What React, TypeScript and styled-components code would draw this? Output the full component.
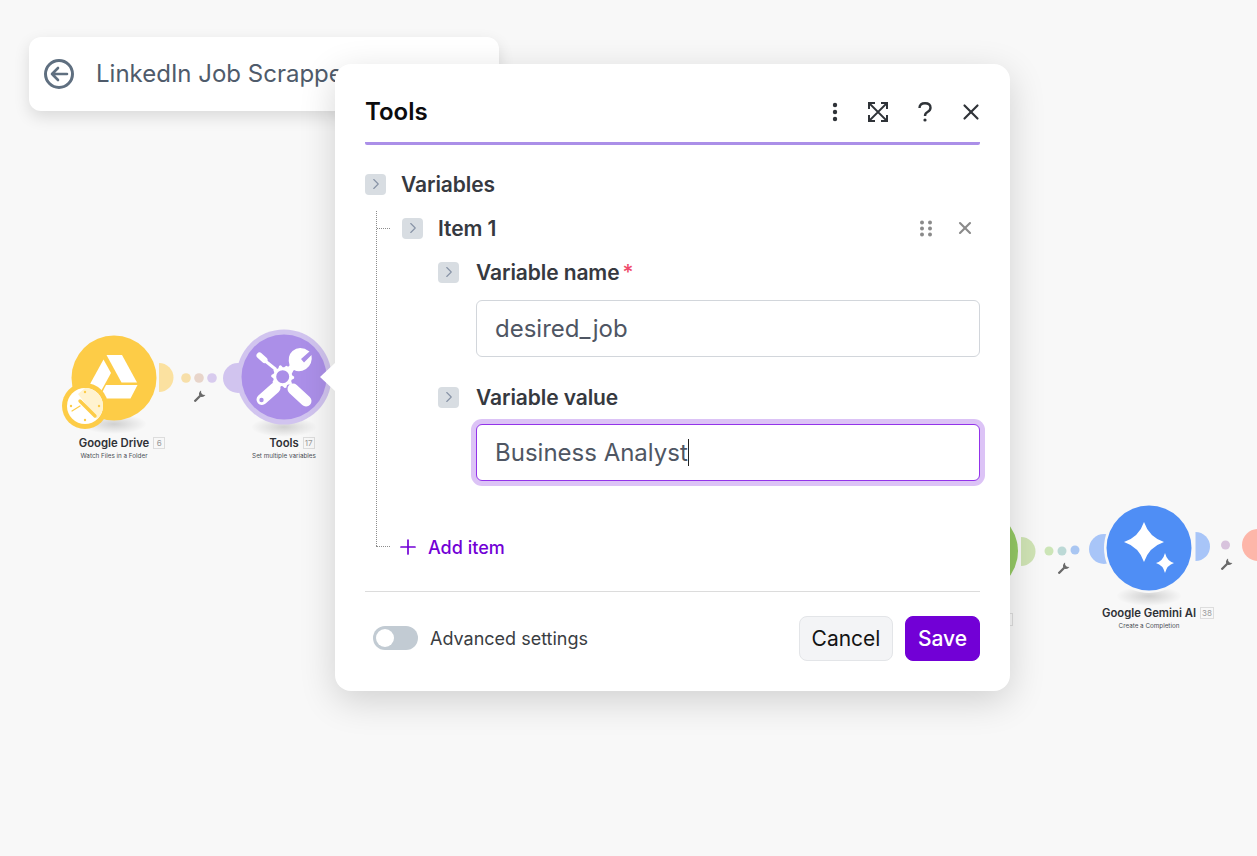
import React from "react";
import styled, { createGlobalStyle } from "styled-components";
import { X, Plus, ChevronRight } from "lucide-react";

const Global = createGlobalStyle`
  html, body { margin: 0; padding: 0; height: 100%; background: #f8f8f8; overflow: hidden; }
  #root { height: 100%; }
  * { box-sizing: border-box; }
`;

const Page = styled.div`
  position: relative;
  width: 1257px;
  height: 856px;
  overflow: hidden;
  background: #f8f8f8;
  font-family: Inter, "Liberation Sans", sans-serif;
`;

const TitleBar = styled.div`
  position: absolute;
  left: 29px;
  top: 37px;
  width: 470px;
  height: 74px;
  background: #fff;
  border-radius: 12px;
  box-shadow: 0 6px 16px rgba(0, 0, 0, 0.12);
  display: flex;
  align-items: center;
  gap: 21px;
  padding: 0 0 1px 14px;
  overflow: hidden;
`;

const TitleText = styled.span`
  font-size: 24px;
  color: #4f5b6b;
  white-space: nowrap;
  padding-bottom: 1px;
`;

const CanvasLayer = styled.svg`
  position: absolute;
  left: 0;
  top: 0;
`;

const NodeLabel = styled.div<{ $x: number; $y: number }>`
  position: absolute;
  left: ${(p) => p.$x}px;
  top: ${(p) => p.$y}px;
  width: 200px;
  transform: translateX(-50%);
  display: flex;
  flex-direction: column;
  align-items: center;
  gap: 2px;
`;

const NodeName = styled.div`
  position: relative;
  font-size: 11.3px;
  font-weight: 600;
  line-height: 13px;
  color: #2f3136;
  white-space: nowrap;
`;

const IdBox = styled.span`
  position: absolute;
  left: calc(100% + 4px);
  top: 0;
  min-width: 12px;
  height: 12px;
  padding: 0 1px;
  border: 1px solid #dddddd;
  font-size: 8px;
  font-weight: 400;
  line-height: 10px;
  text-align: center;
  color: #9a9a9a;
`;

const NodeSub = styled.div`
  font-size: 6.3px;
  line-height: 9px;
  color: #4b4f55;
  white-space: nowrap;
`;

const Modal = styled.div`
  position: absolute;
  left: 335px;
  top: 64px;
  width: 675px;
  height: 627px;
  background: #fff;
  border-radius: 16px;
  box-shadow: 0 10px 36px rgba(0, 0, 0, 0.16);
  padding: 0 30px;
  display: flex;
  flex-direction: column;
`;

const Pointer = styled.div`
  position: absolute;
  left: -15px;
  top: 299px;
  width: 0;
  height: 0;
  border-top: 14px solid transparent;
  border-bottom: 14px solid transparent;
  border-right: 15px solid #fff;
`;

const Header = styled.header`
  height: 81px;
  flex: none;
  border-bottom: 3px solid #ab8fe8;
  border-radius: 0 0 2px 2px;
  display: flex;
  align-items: center;
  justify-content: space-between;
  padding-top: 17px;
`;

const Heading = styled.h2`
  margin: 0;
  font-size: 24px;
  font-weight: 600;
  color: #0c0c0e;
`;

const HeaderIcons = styled.div`
  display: flex;
  align-items: center;
  color: #2f3338;
`;

const IconSlot = styled.span<{ $w: number }>`
  display: flex;
  justify-content: center;
  align-items: center;
  width: ${(p) => p.$w}px;
`;

const CloseSlot = styled.span`
  display: flex;
  justify-content: flex-end;
  width: 52px;
  margin-right: -4px;
`;

const Body = styled.div`
  position: relative;
  flex: 1;
  padding-top: 28px;
`;

const TreeV = styled.div`
  position: absolute;
  left: 11px;
  top: 66px;
  height: 335px;
  border-left: 1px dotted #8d8d8d;
`;

const TreeH = styled.div<{ $top: number; $left: number; $w: number }>`
  position: absolute;
  left: ${(p) => p.$left}px;
  top: ${(p) => p.$top}px;
  width: ${(p) => p.$w}px;
  border-top: 1px dotted #8d8d8d;
`;

const Row = styled.div<{ $indent: number; $mb: number; $gap: number }>`
  display: flex;
  align-items: center;
  gap: ${(p) => p.$gap}px;
  height: 22px;
  margin-left: ${(p) => p.$indent}px;
  margin-bottom: ${(p) => p.$mb}px;
`;

const ChevBox = styled.span`
  width: 21px;
  height: 21px;
  flex: none;
  border-radius: 4px;
  background: #d8dde2;
  color: #8793a6;
  display: flex;
  align-items: center;
  justify-content: center;
`;

const RowLabel = styled.span`
  font-size: 21px;
  font-weight: 600;
  color: #36393f;
  letter-spacing: -0.1px;
  white-space: nowrap;
`;

const Required = styled.span`
  color: #ef4a6b;
  margin-left: 3px;
  font-weight: 500;
`;

const RowActions = styled.div`
  margin-left: auto;
  display: flex;
  align-items: center;
  gap: 23px;
  padding-right: 5px;
  color: #8a8a8a;
`;

const Field = styled.div<{ $focus?: boolean; $mb: number }>`
  margin-left: 111px;
  margin-bottom: ${(p) => p.$mb}px;
  height: 57px;
  padding: 0 0 1px 18px;
  display: flex;
  align-items: center;
  border-radius: 6px;
  background: #fff;
  font-size: 24px;
  color: #4f5663;
  border: 1px solid ${(p) => (p.$focus ? "#9333ea" : "#d2d6db")};
  box-shadow: ${(p) => (p.$focus ? "0 0 0 5px #dcc3f6" : "none")};
`;

const Caret = styled.span`
  display: inline-block;
  width: 1px;
  height: 27px;
  background: #222;
`;

const AddItem = styled.div`
  display: flex;
  align-items: center;
  gap: 8px;
  margin-left: 31px;
  color: #7200d6;
  font-size: 18px;
  font-weight: 500;
`;

const Footer = styled.footer`
  flex: none;
  height: 100px;
  border-top: 1px solid #dcdcdc;
  display: flex;
  align-items: center;
  justify-content: space-between;
  padding: 0 0 7px 8px;
`;

const ToggleWrap = styled.div`
  display: flex;
  align-items: center;
  gap: 12px;
  font-size: 18px;
  color: #3a3d42;
`;

const Toggle = styled.div`
  width: 45px;
  height: 24px;
  border-radius: 12px;
  background: #c2cbd3;
  padding: 3px;
`;

const ToggleKnob = styled.div`
  width: 18px;
  height: 18px;
  border-radius: 50%;
  background: #fff;
`;

const Buttons = styled.div`
  display: flex;
  gap: 12px;
`;

const Btn = styled.button<{ $primary?: boolean }>`
  width: ${(p) => (p.$primary ? 75 : 94)}px;
  height: 45px;
  padding: 0;
  border-radius: 8px;
  font-family: inherit;
  font-size: 21px;
  font-weight: ${(p) => (p.$primary ? 500 : 400)};
  background: ${(p) => (p.$primary ? "#7200d6" : "#f3f4f6")};
  color: ${(p) => (p.$primary ? "#fff" : "#141414")};
  border: 1px solid ${(p) => (p.$primary ? "#7200d6" : "#e3e5e8")};
`;

const Wrench = ({ x, y }: { x: number; y: number }) => (
  <g transform={`translate(${x} ${y}) rotate(45) scale(1.2)`} fill="#6a6a6a">
    <path d="M-1 -1.2 L-1 5 Q0 5.8 1 5 L1 -1.2 Q3 -2.2 2.6 -5 L1 -3.6 L-1 -3.6 L-2.6 -5 Q-3 -2.2 -1 -1.2Z" />
  </g>
);

const Shadow = ({ cx, cy }: { cx: number; cy: number }) => (
  <ellipse cx={cx} cy={cy} rx="33" ry="10" fill="url(#nodeShadow)" />
);

const gearPath = () => {
  const teeth = 10;
  let d = "";
  for (let i = 0; i < teeth * 4; i++) {
    const a = (i / (teeth * 4)) * Math.PI * 2;
    const r = i % 4 < 2 ? 11.5 : 9.5;
    d += `${i === 0 ? "M" : "L"}${(Math.cos(a) * r).toFixed(2)} ${(Math.sin(a) * r).toFixed(2)} `;
  }
  return d + "Z M6.5 0 A6.5 6.5 0 1 0 -6.5 0 A6.5 6.5 0 1 0 6.5 0Z";
};

const Canvas = () => (
  <CanvasLayer width="1257" height="856" viewBox="0 0 1257 856">
    <defs>
      <radialGradient id="nodeShadow">
        <stop offset="0%" stopColor="#000" stopOpacity="0.16" />
        <stop offset="100%" stopColor="#000" stopOpacity="0" />
      </radialGradient>
    </defs>

    {/* Google Drive */}
    <Shadow cx={114} cy={424} />
    <path d="M159 363 A14.5 14.5 0 0 1 159 392 Z" fill="#fbe1a0" />
    <circle cx="114" cy="378" r="42.5" fill="#fdcc47" />
    <path d="M106.5 355 L122 355 L137 382.5 L121.5 382.5 Z" fill="#fff" />
    <path d="M103.5 359.5 L111 373 L97 398.5 L89.5 385 Z" fill="#fff" />
    <path d="M106 385 L137.5 385 L130.5 398.5 L99 398.5 Z" fill="#fff" />
    <circle cx="85" cy="406" r="23" fill="#fdcc47" />
    <circle cx="85" cy="406" r="18" fill="#fff" />
    <path d="M85 388 A18 18 0 0 1 103 406 A18 18 0 0 1 97 419 L78 394 Z" fill="#fff3cf" />
    <g fill="#fdcc47">
      <circle cx="85" cy="392" r="1.2" />
      <circle cx="99" cy="406" r="1.2" />
      <circle cx="85" cy="420" r="1.2" />
      <circle cx="71" cy="406" r="1.2" />
    </g>
    <path d="M80 401 L95 416" stroke="#fdcc47" strokeWidth="3.4" strokeLinecap="round" />
    <path d="M80 406 L72 411" stroke="#fdcc47" strokeWidth="1.2" strokeLinecap="round" />

    <circle cx="186" cy="378" r="4.8" fill="#f7dfa9" />
    <circle cx="199" cy="378" r="4.8" fill="#e8d5ca" />
    <circle cx="212" cy="378" r="4.8" fill="#d8cbee" />
    <Wrench x={199} y={397} />

    {/* Tools */}
    <Shadow cx={284} cy={427} />
    <circle cx="238" cy="378" r="15" fill="#d1c4ef" />
    <circle cx="284" cy="377" r="47.5" fill="#d1c4ef" />
    <circle cx="284" cy="377" r="42.5" fill="#ab8fe8" />
    <g fill="none" stroke="#fff" strokeLinecap="round">
      <path d="M259.5 355.5 L264.5 360" strokeWidth="6" />
      <path d="M264 360 L276 369.5" strokeWidth="3" strokeLinecap="butt" />
      <path d="M293 389 L306 401" strokeWidth="11" strokeLinecap="round" />
      <path d="M275 388 L262 399.5" strokeWidth="11" />
      <path d="M287.5 372 L293 366.500" strokeWidth="6.500" strokeLinecap="butt" />
    </g>
    <circle cx="261.500" cy="400" r="2.200" fill="#ab8fe8" />
    <path
      d="M309.500 351.500 L301 359 L304 362.500 L311.500 355 Q313 364 306 369 Q299.500 373 294 370 L289.500 365 Q287 356 292.500 351 Q300 345 309.500 351.500Z"
      fill="#fff"
    />
    <path d={gearPath()} transform="translate(282.700 376.700)" fill="#fff" fillRule="evenodd" />

    {/* Hidden green node */}
    <circle cx="975.500" cy="551" r="42.500" fill="#94c963" />
    <path d="M1021 537 A14.500 14.500 0 0 1 1021 566 Z" fill="#cfe3b4" />
    <circle cx="1049" cy="551" r="4.500" fill="#cce5b7" />
    <circle cx="1062" cy="551" r="4.500" fill="#bcd9d6" />
    <circle cx="1075" cy="550" r="4.500" fill="#a9c6f2" />
    <Wrench x={1063} y={569} />
    <rect x="1006.500" y="613.500" width="6" height="12" fill="none" stroke="#dddddd" />

    {/* Gemini */}
    <Shadow cx={1149} cy={596} />
    <circle cx="1104" cy="549" r="15" fill="#a8c5f8" />
    <circle cx="1149" cy="548" r="45" fill="#f8f8f8" />
    <circle cx="1149" cy="548" r="42.500" fill="#4f8ef5" />
    <path d="M1195.500 532 A14.500 14.500 0 0 1 1195.500 561 Z" fill="#a8c5f8" />
    <path d="M1144 522 Q1149 537 1164 542 Q1149 547 1144 562 Q1139 547 1124 542 Q1139 537 1144 522Z" fill="#fff" />
    <path d="M1165 553 Q1167 561 1174 563 Q1167 565 1165 573 Q1163 565 1156 563 Q1163 561 1165 553Z" fill="#fff" />
    <circle cx="1225.500" cy="545" r="4.500" fill="#d8c3dd" />
    <Wrench x={1226} y={565} />
    <circle cx="1258" cy="545" r="16" fill="#fdb6a9" />
  </CanvasLayer>
);

const BackIcon = () => (
  <svg width="32" height="32" viewBox="0 0 32 32" fill="none" stroke="#5f6f80" strokeWidth="3">
    <circle cx="16" cy="16" r="13.500" />
    <path d="M24 16 H9 M15 10 L9 16 L15 22" strokeLinecap="round" strokeLinejoin="round" strokeWidth="2.600" />
  </svg>
);

const KebabIcon = () => (
  <svg width="6" height="20" viewBox="0 0 6 20" fill="currentColor">
    <circle cx="3" cy="3" r="2.200" />
    <circle cx="3" cy="10" r="2.200" />
    <circle cx="3" cy="17" r="2.200" />
  </svg>
);

const ExpandIcon = () => (
  <svg width="20" height="20" viewBox="0 0 20 20" fill="none" stroke="currentColor" strokeWidth="2">
    <path d="M1 7 V1 H7 M13 1 H19 V7 M19 13 V19 H13 M7 19 H1 V13" />
    <path d="M2 2 L18 18 M18 2 L2 18" strokeWidth="1.800" />
  </svg>
);

const QuestionIcon = () => (
  <svg width="14" height="20" viewBox="0 0 14 20" fill="none" stroke="currentColor" strokeWidth="2.400">
    <path d="M1.500 6 Q1.500 1.300 7 1.300 Q12.500 1.300 12.500 5.800 Q12.500 8.500 9.500 10 Q7 11.300 7 14" />
    <circle cx="7" cy="18" r="1.600" fill="currentColor" stroke="none" />
  </svg>
);

const GripIcon = () => (
  <svg width="12" height="17" viewBox="0 0 12 17" fill="#8a8a8a">
    {[2.500, 8.500, 14.500].map((y) =>
      [2, 10].map((x) => <circle key={`${x}-${y}`} cx={x} cy={y} r="2" />)
    )}
  </svg>
);

const Chevron = () => (
  <ChevBox>
    <ChevronRight size={18} strokeWidth={1.500} />
  </ChevBox>
);

export default function App() {
  return (
    <Page>
      <Global />
      <TitleBar>
        <BackIcon />
        <TitleText>LinkedIn Job Scrapper</TitleText>
      </TitleBar>

      <Canvas />

      <NodeLabel $x={114} $y={437}>
        <NodeName>
          Google Drive<IdBox>6</IdBox>
        </NodeName>
        <NodeSub>Watch Files in a Folder</NodeSub>
      </NodeLabel>
      <NodeLabel $x={284} $y={437}>
        <NodeName>
          Tools<IdBox>17</IdBox>
        </NodeName>
        <NodeSub>Set multiple variables</NodeSub>
      </NodeLabel>
      <NodeLabel $x={1149} $y={607}>
        <NodeName>
          Google Gemini AI<IdBox>38</IdBox>
        </NodeName>
        <NodeSub>Create a Completion</NodeSub>
      </NodeLabel>

      <Modal>
        <Pointer />
        <Header>
          <Heading>Tools</Heading>
          <HeaderIcons>
            <IconSlot $w={6}>
              <KebabIcon />
            </IconSlot>
            <IconSlot $w={80}>
              <ExpandIcon />
            </IconSlot>
            <IconSlot $w={14}>
              <QuestionIcon />
            </IconSlot>
            <CloseSlot>
              <X size={26} strokeWidth={2} />
            </CloseSlot>
          </HeaderIcons>
        </Header>
        <Body>
          <TreeV />
          <TreeH $top={83} $left={12} $w={13} />
          <TreeH $top={401} $left={11} $w={14} />
          <Row $indent={0} $mb={22} $gap={15}>
            <Chevron />
            <RowLabel>Variables</RowLabel>
          </Row>
          <Row $indent={37} $mb={22} $gap={15}>
            <Chevron />
            <RowLabel>Item 1</RowLabel>
            <RowActions>
              <GripIcon />
              <X size={20} strokeWidth={2.500} />
            </RowActions>
          </Row>
          <Row $indent={73} $mb={17} $gap={17}>
            <Chevron />
            <RowLabel>
              Variable name<Required>*</Required>
            </RowLabel>
          </Row>
          <Field $mb={29}>desired_job</Field>
          <Row $indent={73} $mb={16} $gap={17}>
            <Chevron />
            <RowLabel>Variable value</RowLabel>
          </Row>
          <Field $focus $mb={54}>
            Business Analyst
            <Caret />
          </Field>
          <AddItem>
            <Plus size={24} strokeWidth={1.700} />
            Add item
          </AddItem>
        </Body>
        <Footer>
          <ToggleWrap>
            <Toggle>
              <ToggleKnob />
            </Toggle>
            Advanced settings
          </ToggleWrap>
          <Buttons>
            <Btn>Cancel</Btn>
            <Btn $primary>Save</Btn>
          </Buttons>
        </Footer>
      </Modal>
    </Page>
  );
}
